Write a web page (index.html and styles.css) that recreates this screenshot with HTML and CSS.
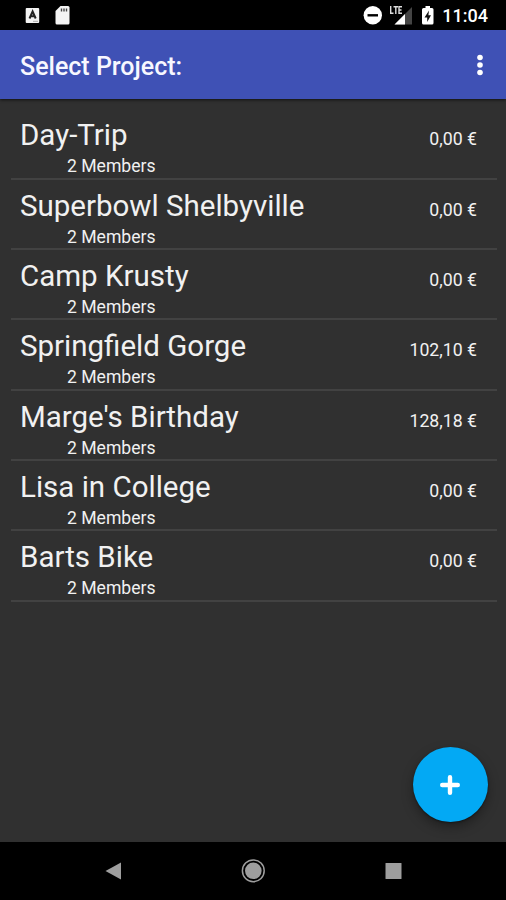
FILE: index.html
```html
<!DOCTYPE html>
<html lang="en">
<head>
<meta charset="utf-8">
<title>Select Project</title>
<link rel="stylesheet" href="styles.css">
</head>
<body>
<div class="screen">
  <div class="status">
    <svg class="status-left" width="60" height="30" viewBox="0 0 60 30">
      <rect x="5.700" y="8" width="13.500" height="15" rx="1" fill="#f4f4f4"/>
      <path d="M9.500 18.500L12.600 11.500L15.700 18.500M10.700 16.200H14.500" fill="none" stroke="#222" stroke-width="2"/>
      <path d="M13 21.300H18" stroke="#aaa"/>
      <path d="M40.500 6H48Q49.500 6 49.500 7.500V23Q49.500 24.500 48 24.500H37Q35.500 24.500 35.500 23V11Z" fill="#f4f4f4"/>
      <path d="M41.500 8.500V11.500M44 8.500V11.500M46.500 8.500V11.500" stroke="#444" stroke-width="1.400"/>
    </svg>
    <div class="status-right">
      <svg width="76" height="30" viewBox="364 0 76 30">
        <circle cx="373.800" cy="15.300" r="9.200" fill="#fff"/>
        <path d="M368.500 15.300H379" stroke="#000" stroke-width="2.400"/>
        <path d="M413 7V24.500H395.500Z" fill="#444"/>
        <path d="M406 14V24.500H395.500Z" fill="#fff"/>
        <path d="M390 5.500H403V14.500H390Z" fill="#000"/>
        <path d="M391.700 6V13.200H394.500M394.500 6.800H399M396.800 6.800V14M403 6.800H400V13.200H403M400 10H402.500" fill="none" stroke="#ddd" stroke-width="1.400"/>
        <path d="M426.500 6H431V8H433Q434.500 8 434.500 9.500V23Q434.500 24.500 433 24.500H424.500Q423 24.500 423 23V9.500Q423 8 424.500 8H426.500Z" fill="#fff"/>
        <path d="M430 10.500L425.500 17.500H428.200V22L432 15.300H429.400Z" fill="#111"/>
      </svg>
      <span class="clock">11:04</span>
    </div>
  </div>
  <header class="toolbar">
    <h1>Select Project:</h1>
    <svg class="more" width="8" height="24" viewBox="0 0 8 24" fill="#fff"><circle cx="4" cy="4.500" r="2.800"/><circle cx="4" cy="12" r="2.800"/><circle cx="4" cy="19.500" r="2.800"/></svg>
  </header>
  <main>
    <ul class="projects">
      <li><div><div class="name">Day-Trip</div><div class="members">2 Members</div></div><span class="amount">0,00 €</span></li>
      <li><div><div class="name">Superbowl Shelbyville</div><div class="members">2 Members</div></div><span class="amount">0,00 €</span></li>
      <li><div><div class="name">Camp Krusty</div><div class="members">2 Members</div></div><span class="amount">0,00 €</span></li>
      <li><div><div class="name">Springfield Gorge</div><div class="members">2 Members</div></div><span class="amount">102,10 €</span></li>
      <li><div><div class="name">Marge's Birthday</div><div class="members">2 Members</div></div><span class="amount">128,18 €</span></li>
      <li><div><div class="name">Lisa in College</div><div class="members">2 Members</div></div><span class="amount">0,00 €</span></li>
      <li><div><div class="name">Barts Bike</div><div class="members">2 Members</div></div><span class="amount">0,00 €</span></li>
    </ul>
    <button class="fab" aria-label="Add project"><svg width="20" height="20" viewBox="0 0 20 20"><path d="M10 2.200V17.800M2.200 10H17.800" stroke="#fff" stroke-width="4.400" stroke-linecap="round"/></svg></button>
  </main>
  <nav class="navbar">
    <svg width="506" height="58" viewBox="0 842 506 58" fill="#9e9e9e">
      <path d="M105.500 871L121 862.500V879.500Z"/>
      <circle cx="253.300" cy="870.800" r="8.300"/>
      <circle cx="253.300" cy="870.800" r="10.900" fill="none" stroke="#9e9e9e" stroke-width="1.500"/>
      <rect x="385.500" y="863" width="16" height="16" rx=".5"/>
    </svg>
  </nav>
</div>
</body>
</html>
```

FILE: styles.css
```css
* { box-sizing: border-box; }
body { margin: 0; background: #303030; color: #f1f1f1; font-family: Roboto, sans-serif; }
.screen { width: 506px; height: 900px; display: flex; flex-direction: column; overflow: hidden; }
.status { height: 30px; flex: none; background: #000; display: flex; justify-content: space-between; padding: 0 18px 0 20px; }
.status-right { display: flex; align-items: center; gap: 3px; }
.clock { font-size: 18px; font-weight: 500; line-height: 30px; padding-top: 2px; color: #fff; }
.toolbar { height: 69px; flex: none; background: #3f51b5; display: flex; align-items: center; justify-content: space-between; padding: 0 22px 0 20px; box-shadow: 0 1px 3px rgba(0, 0, 0, .65); position: relative; z-index: 1; }
h1 { margin: 0; padding-top: 4px; font-size: 25px; font-weight: 500; line-height: 30px; color: #f7f7ff; }
main { flex: 1; position: relative; background: #303030; }
.projects { list-style: none; margin: 0; padding: 10.4px 9px 0 11px; }
.projects li { height: 70.33px; border-bottom: 2px solid #424242; display: flex; justify-content: space-between; padding: 8px 20px 0 9px; }
.name { font-size: 29.5px; line-height: 36px; }
.members { font-size: 17.6px; line-height: 20px; padding: 3px 0 0 47px; }
.amount { font-size: 17.7px; line-height: 24px; padding-top: 10px; }
.fab { position: absolute; right: 18.5px; bottom: 20px; width: 75px; height: 75px; border: 0; padding: 0 1px 0 0; border-radius: 50%; background: #03a9f4; display: flex; align-items: center; justify-content: center; box-shadow: 0 5px 12px rgba(0, 0, 0, .35), 0 1px 2px rgba(0, 0, 0, .4); }
.navbar { height: 58px; flex: none; background: #000; }
.navbar svg { display: block; }
```
